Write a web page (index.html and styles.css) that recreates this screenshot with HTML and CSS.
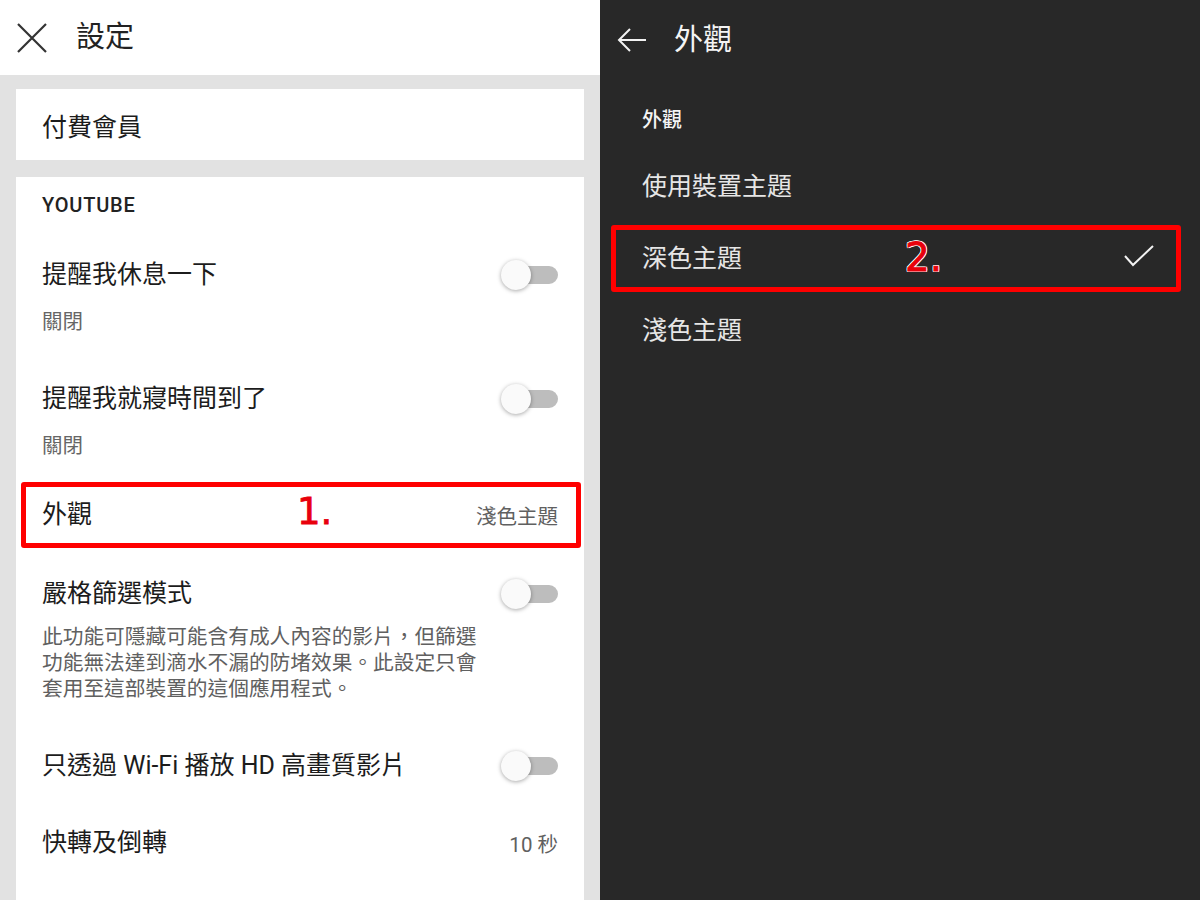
FILE: index.html
```html
<!DOCTYPE html>
<html lang="zh-Hant">
<head>
<meta charset="utf-8">
<title>設定</title>
<link rel="stylesheet" href="styles.css">
</head>
<body>
<div class="left">
  <header class="lhead">
    <svg class="icon" width="30" height="30" viewBox="0 0 30 30"><path d="M1 1 L29 29 M29 1 L1 29" stroke="#333" stroke-width="2.2" fill="none"/></svg>
    <h1 class="htitle">設定</h1>
  </header>
  <main class="lbody">
    <section class="card premium">付費會員</section>
    <section class="card main">
      <div class="sec-title">YOUTUBE</div>
      <div class="row two">
        <div class="txt"><div class="title">提醒我休息一下</div><div class="sub">關閉</div></div>
        <span class="toggle"><span class="track"></span><span class="knob"></span></span>
      </div>
      <div class="row two">
        <div class="txt"><div class="title">提醒我就寢時間到了</div><div class="sub">關閉</div></div>
        <span class="toggle"><span class="track"></span><span class="knob"></span></span>
      </div>
      <div class="row single look">
        <div class="title">外觀</div>
        <div class="value">淺色主題</div>
        <span class="mark mark1"></span>
        <span class="num num1">1.</span>
      </div>
      <div class="row strict">
        <div class="txt"><div class="title">嚴格篩選模式</div><div class="desc">此功能可隱藏可能含有成人內容的影片，但篩選功能無法達到滴水不漏的防堵效果。此設定只會套用至這部裝置的這個應用程式。</div></div>
        <span class="toggle"><span class="track"></span><span class="knob"></span></span>
      </div>
      <div class="row single line77">
        <div class="title">只透過 Wi-Fi 播放 HD 高畫質影片</div>
        <span class="toggle"><span class="track"></span><span class="knob"></span></span>
      </div>
      <div class="row single line77">
        <div class="title">快轉及倒轉</div>
        <div class="value">10 秒</div>
      </div>
    </section>
  </main>
</div>
<div class="right">
  <header class="rhead">
    <svg class="icon" width="30" height="30" viewBox="0 0 30 30"><path d="M2 15 H29 M13 4 L2 15 L13 26" stroke="#f2f2f2" stroke-width="2" fill="none"/></svg>
    <h1 class="htitle dark">外觀</h1>
  </header>
  <div class="rsec">外觀</div>
  <div class="ropt">使用裝置主題</div>
  <div class="ropt">深色主題
    <svg class="check" width="30" height="24" viewBox="0 0 30 24"><path d="M1 12 L9 21 L29 2" stroke="#f2f2f2" stroke-width="2" fill="none"/></svg>
    <span class="mark mark2"></span>
    <span class="num num2">2.</span>
  </div>
  <div class="ropt">淺色主題</div>
</div>
</body>
</html>
```
FILE: styles.css
```css
* { box-sizing: border-box; }
body {
  margin: 0;
  width: 1200px;
  height: 900px;
  display: flex;
  overflow: hidden;
  font-family: Roboto, "Noto Sans CJK TC", sans-serif;
}
.left {
  width: 600px;
  background: #e2e2e2;
  display: flex;
  flex-direction: column;
}
.lhead {
  height: 75px;
  background: #fff;
  display: flex;
  align-items: center;
  padding-left: 17px;
  gap: 29px;
}
.icon { display: block; flex: none; }
.htitle {
  margin: 0;
  font-size: 29px;
  font-weight: 400;
  line-height: 1;
  color: #222;
}
.htitle.dark { color: #f4f4f4; }
.lbody {
  flex: 1;
  padding: 14px 16px 0;
  display: flex;
  flex-direction: column;
  gap: 17px;
}
.card { background: #fff; }
.premium {
  height: 71px;
  display: flex;
  align-items: center;
  padding: 0 26px;
  font-size: 25px;
  color: #1c1c1c;
}
.main { flex: 1; }
.sec-title {
  padding: 16px 26px;
  font-size: 20px;
  font-weight: 500;
  line-height: 24px;
  letter-spacing: 0.8px;
  color: #222;
}
.row {
  position: relative;
  display: flex;
  align-items: flex-start;
  justify-content: space-between;
  padding: 0 26px;
}
.row.two { height: 124px; padding-top: 26px; }
.row.single { align-items: center; }
.row.look { height: 68px; }
.row.line77 { height: 77px; }
.row.strict { padding-top: 29px; padding-bottom: 25px; }
.title {
  font-size: 25px;
  line-height: 32px;
  color: #1c1c1c;
  white-space: nowrap;
}
.sub {
  margin-top: 18px;
  font-size: 20.5px;
  line-height: 26px;
  color: #666;
}
.desc {
  margin-top: 14px;
  width: 442px;
  font-size: 20.7px;
  line-height: 26px;
  color: #606060;
}
.value {
  font-size: 20.5px;
  color: #606060;
}
.toggle {
  position: relative;
  flex: none;
  width: 58px;
  height: 30px;
  margin-top: 1px;
}
.row.single .toggle { margin-top: 0; }
.track {
  position: absolute;
  left: 5px;
  right: 0;
  top: 6px;
  height: 18px;
  border-radius: 9px;
  background: #bdbdbd;
}
.knob {
  position: absolute;
  left: 1px;
  top: 0;
  width: 30px;
  height: 30px;
  border-radius: 50%;
  background: #fafafa;
  box-shadow: 0 1px 4px rgba(0,0,0,0.35);
}
.mark {
  position: absolute;
  border: 5px solid #ff0000;
  border-radius: 3px;
  pointer-events: none;
}
.mark1 { left: 5px; right: 3px; top: 1px; bottom: 1px; }
.mark2 { left: 11px; right: 19px; top: 5px; bottom: 0; }
.num {
  position: absolute;
  font-family: "DejaVu Sans", sans-serif;
  font-weight: 400;
  color: #e8000b;
  line-height: 1;
  -webkit-text-stroke: 0.8px #e8000b;
}
.num1 { left: 281px; top: 12px; font-size: 37px; }
.num2 {
  left: 305px; top: 18px; font-size: 39px;
  text-shadow: 1px 0 #fff, -1px 0 #fff, 0 1px #fff, 0 -1px #fff, 1px 1px #fff, -1px -1px #fff, 1px -1px #fff, -1px 1px #fff;
}
.right {
  flex: 1;
  background: #282828;
  color: #ececec;
}
.rhead {
  height: 80px;
  display: flex;
  align-items: center;
  padding-left: 17px;
  gap: 27px;
}
.rsec {
  padding: 28px 42px 16px;
  font-size: 20px;
  font-weight: 500;
  line-height: 24px;
  color: #f4f4f4;
}
.ropt {
  position: relative;
  height: 72px;
  display: flex;
  align-items: center;
  justify-content: space-between;
  padding: 0 46px 0 42px;
  font-size: 25px;
  color: #e6e6e6;
}
.check { display: block; }
```
